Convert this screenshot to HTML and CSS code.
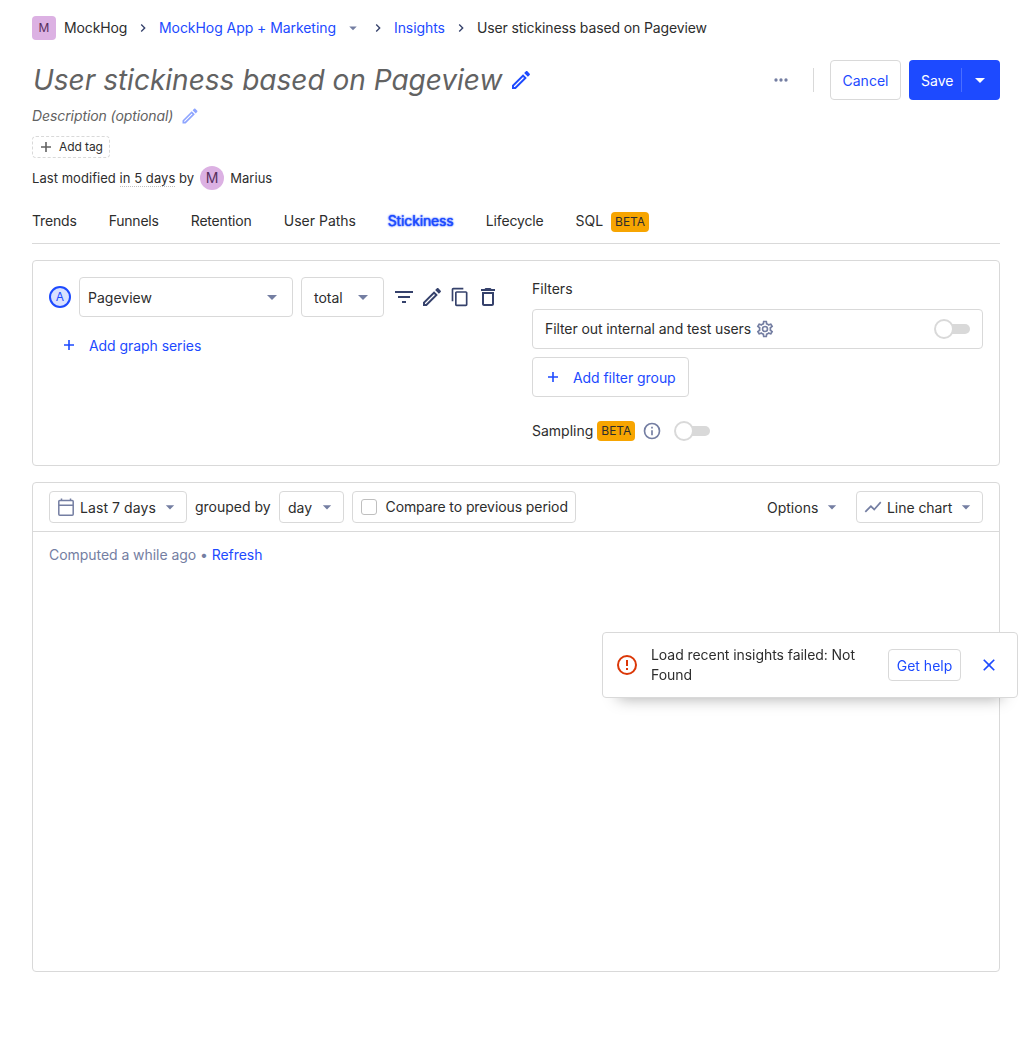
FILE: index.html
```html
<!DOCTYPE html>
<html lang="en">
<head>
<meta charset="utf-8">
<title>User stickiness based on Pageview</title>
<link rel="stylesheet" href="styles.css">
</head>
<body>
<svg class="defs" aria-hidden="true">
  <symbol id="chevron" viewBox="0 0 24 24"><path d="M8.59 16.59 13.17 12 8.59 7.41 10 6l6 6-6 6z"/></symbol>
  <symbol id="caret" viewBox="0 0 24 24"><path d="m7 10 5 5 5-5z"/></symbol>
  <symbol id="pencil" viewBox="0 0 24 24"><path d="M14.06 9.02l.92.92L5.92 19H5v-.92l9.06-9.06M17.66 3c-.25 0-.51.1-.7.29l-1.83 1.83 3.75 3.75 1.83-1.83c.39-.39.39-1.02 0-1.41l-2.34-2.34c-.2-.2-.45-.29-.71-.29zm-3.6 3.19L3 17.25V21h3.75L17.81 9.94l-3.75-3.75z"/></symbol>
  <symbol id="plus" viewBox="0 0 20 20"><path d="M15 10.800h-4.200V15H9.200v-4.200H5V9.200h4.200V5h1.600v4.200H15z"/></symbol>
</svg>
<main class="page">
  <nav class="crumbs">
    <span class="avatar square">M</span><span class="org">MockHog</span>
    <svg class="chev"><use href="#chevron"/></svg>
    <a class="project">MockHog App + Marketing</a><svg class="crumb-caret"><use href="#caret"/></svg>
    <svg class="chev"><use href="#chevron"/></svg>
    <a class="section">Insights</a>
    <svg class="chev"><use href="#chevron"/></svg>
    <span class="current">User stickiness based on Pageview</span>
  </nav>
  <header class="titlebar">
    <h1>User stickiness based on Pageview</h1>
    <svg class="title-edit"><use href="#pencil"/></svg>
    <div class="actions">
      <svg class="more" viewBox="0 0 24 24"><path d="M6 10a2 2 0 1 0 0 4 2 2 0 0 0 0-4zm6 0a2 2 0 1 0 0 4 2 2 0 0 0 0-4zm6 0a2 2 0 1 0 0 4 2 2 0 0 0 0-4z"/></svg>
      <i class="divider"></i>
      <button class="btn cancel">Cancel</button>
      <div class="save"><span>Save</span><i></i><svg><use href="#caret"/></svg></div>
    </div>
  </header>
  <div class="description"><em>Description (optional)</em><svg><use href="#pencil"/></svg></div>
  <div class="tag"><svg><use href="#plus"/></svg><span>Add tag</span></div>
  <div class="modified"><span>Last modified <u>in 5 days</u> by</span><span class="avatar round">M</span><span>Marius</span></div>
  <nav class="tabs">
    <span>Trends</span><span>Funnels</span><span>Retention</span><span class="paths">User Paths</span><span class="active">Stickiness</span><span>Lifecycle</span><span class="sql">SQL <b class="beta">BETA</b></span>
  </nav>
  <section class="card query">
    <div class="series">
      <div class="series-row">
        <span class="letter">A</span>
        <div class="btn event"><span>Pageview</span><svg><use href="#caret"/></svg></div>
        <div class="btn math"><span>total</span><svg><use href="#caret"/></svg></div>
        <div class="tools">
          <svg viewBox="0 0 24 24"><path d="M10 18h4v-2h-4v2zM3 6v2h18V6H3zm3 7h12v-2H6v2z"/></svg>
          <svg><use href="#pencil"/></svg>
          <svg class="copy" viewBox="0 0 24 24"><path d="M16 1H4c-1.100 0-2 .9-2 2v14h2V3h12V1zm3 4H8c-1.100 0-2 .9-2 2v14c0 1.100.9 2 2 2h11c1.100 0 2-.9 2-2V7c0-1.100-.9-2-2-2zm0 16H8V7h11v14z"/></svg>
          <svg viewBox="0 0 24 24"><path d="M6 19c0 1.100.9 2 2 2h8c1.100 0 2-.9 2-2V7H6v12zM8 9h8v10H8V9zm7.500-5-1-1h-5l-1 1H5v2h14V4z"/></svg>
        </div>
      </div>
      <div class="add-series"><svg><use href="#plus"/></svg><span>Add graph series</span></div>
    </div>
    <div class="filters">
      <div class="filters-title">Filters</div>
      <div class="btn internal"><span>Filter out internal and test users</span>
        <svg class="gear" viewBox="0 0 24 24"><path d="M19.430 12.980c.04-.32.07-.64.07-.98s-.03-.66-.07-.98l2.110-1.650c.19-.15.24-.42.12-.64l-2-3.460a.5.5 0 0 0-.61-.22l-2.490 1c-.52-.4-1.080-.73-1.690-.98l-.38-2.650A.49.49 0 0 0 14 2h-4c-.25 0-.46.18-.49.42l-.38 2.650c-.61.25-1.170.59-1.690.98l-2.490-1a.5.5 0 0 0-.61.22l-2 3.460c-.13.22-.07.49.12.64l2.110 1.650c-.04.32-.07.65-.07.98s.03.66.07.98l-2.110 1.650c-.19.15-.24.42-.12.64l2 3.460c.12.22.39.3.61.22l2.490-1c.52.4 1.080.73 1.690.98l.38 2.650c.03.24.24.42.49.42h4c.25 0 .46-.18.49-.42l.38-2.650c.61-.25 1.170-.59 1.690-.98l2.490 1c.23.09.49 0 .61-.22l2-3.460c.12-.22.07-.49-.12-.64zm-1.980-1.710c.04.31.05.52.05.73s-.02.43-.05.73l-.14 1.130.89.7 1.080.84-.7 1.210-1.270-.51-1.040-.42-.9.68c-.43.32-.84.56-1.250.73l-1.060.43-.16 1.130-.2 1.350h-1.400l-.19-1.350-.16-1.130-1.060-.43c-.43-.18-.83-.41-1.230-.71l-.91-.7-1.060.43-1.270.51-.7-1.210 1.080-.84.89-.7-.14-1.130c-.03-.31-.05-.54-.05-.74s.02-.43.05-.73l.14-1.130-.89-.7-1.080-.84.7-1.210 1.270.51 1.040.42.9-.68c.43-.32.84-.56 1.250-.73l1.060-.43.16-1.130.2-1.350h1.390l.19 1.350.16 1.130 1.060.43c.43.18.83.41 1.230.71l.91.7 1.060-.43 1.270-.51.7 1.210-1.070.85-.89.7zM12 8a4 4 0 1 0 0 8 4 4 0 0 0 0-8zm0 6a2 2 0 1 1 0-4 2 2 0 0 1 0 4z"/></svg>
        <span class="switch"><i></i></span>
      </div>
      <div class="btn add-filter"><svg><use href="#plus"/></svg><span>Add filter group</span></div>
      <div class="sampling"><span>Sampling</span><b class="beta">BETA</b>
        <svg viewBox="0 0 24 24"><path d="M11 7h2v2h-2zm0 4h2v6h-2zm1-9a10 10 0 1 0 0 20 10 10 0 0 0 0-20zm0 18a8 8 0 1 1 0-16 8 8 0 0 1 0 16z"/></svg>
        <span class="switch"><i></i></span>
      </div>
    </div>
  </section>
  <section class="card result">
    <div class="toolbar">
      <div class="btn small range"><svg class="lead calendar" viewBox="0 0 20 20"><path d="M3.800 3.500h12.400a1 1 0 0 1 1 1v12.700a1 1 0 0 1-1 1H3.800a1 1 0 0 1-1-1V4.500a1 1 0 0 1 1-1zM2.800 8.300h14.400M5.500 1.500v2M14.500 1.500v2"/></svg><span>Last 7 days</span><svg class="drop"><use href="#caret"/></svg></div>
      <span class="grouped">grouped by</span>
      <div class="btn small interval"><span>day</span><svg class="drop"><use href="#caret"/></svg></div>
      <label class="btn small compare"><i class="box"></i><span>Compare to previous period</span></label>
      <div class="options"><span>Options</span><svg class="drop"><use href="#caret"/></svg></div>
      <div class="btn small chart"><svg class="lead" viewBox="0 0 24 24"><path d="m3.500 18.490 6-6.010 4 4L22 6.920l-1.410-1.410-7.090 7.970-4-4L2 16.990z"/></svg><span>Line chart</span><svg class="drop"><use href="#caret"/></svg></div>
    </div>
    <div class="computed">Computed a while ago • <a>Refresh</a></div>
  </section>
</main>
<div class="toast">
  <svg class="error" viewBox="0 0 24 24"><path d="M11 15h2v2h-2zm0-8h2v6h-2zm1-5a10 10 0 1 0 0 20 10 10 0 0 0 0-20zm0 18a8 8 0 1 1 0-16 8 8 0 0 1 0 16z"/></svg>
  <p>Load recent insights failed: Not Found</p>
  <button class="btn small help">Get help</button>
  <svg class="close" viewBox="0 0 24 24"><path d="M19 6.410 17.590 5 12 10.590 6.410 5 5 6.410 10.590 12 5 17.590 6.410 19 12 13.410 17.590 19 19 17.590 13.410 12z"/></svg>
</div>
</body>
</html>
```
FILE: styles.css
```css
* { box-sizing: border-box; }
body { margin: 0; height: 1052px; background: #fff; color: #2d2d2d; font: 400 14px/20px Inter, sans-serif; overflow: hidden; }
svg { display: block; flex: none; fill: currentColor; }
span { white-space: nowrap; }
a { color: #1d4aff; }
.defs { position: absolute; width: 0; height: 0; }
.page { padding: 16px 32px 0; }
.crumbs { display: flex; align-items: center; height: 24px; white-space: nowrap; }
.avatar { display: flex; align-items: center; justify-content: center; width: 24px; height: 24px; background: #dcb1e3; color: #572e5e; }
.square { border-radius: 4px; font-size: 12px; margin-right: 8px; }
.round { border-radius: 50%; font-size: 14px; margin: 0 6px; }
.org { width: 63px; letter-spacing: -.12px; }
.project { width: 177px; letter-spacing: -.06px; }
.section { width: 51px; letter-spacing: -.08px; }
.current { letter-spacing: -.12px; }
.chev { width: 16px; height: 16px; margin: 0 8px; color: #35416b; }
.crumb-caret { width: 18px; height: 18px; margin: 0 8px; color: #747ea2; }
.crumb-caret + .chev { margin-left: 0; }
.titlebar { display: flex; align-items: center; height: 40px; margin-top: 20px; }
h1 { margin: 0 0 0 1px; font-size: 28px; line-height: 40px; font-weight: 400; font-style: italic; color: #626262; white-space: nowrap; }
.title-edit { width: 24px; height: 24px; margin-left: 7px; color: #1d4aff; }
.actions { display: flex; align-items: center; margin-left: auto; }
.more { width: 20px; height: 20px; color: #747ea2; margin-right: 22px; }
.divider { width: 1px; height: 24px; background: #d9d9d9; margin-right: 16px; }
.btn { display: flex; align-items: center; height: 40px; border: 1px solid #d9d9d9; border-radius: 4px; background: #fff; color: #2d2d2d; font: inherit; padding: 0; }
.cancel { width: 71px; justify-content: center; color: #1d4aff; margin-right: 8px; padding-top: 2px; }
.save { display: flex; align-items: center; width: 91px; height: 40px; border-radius: 4px; background: #1d4aff; color: #fff; padding-left: 12px; }
.save span { width: 40px; padding-top: 2px; }
.save i { width: 1px; height: 24px; background: #4a6eff; }
.save svg { width: 24px; height: 24px; margin-left: 6px; }
.description { display: flex; align-items: center; height: 20px; margin-top: 6px; color: #626262; letter-spacing: -.09px; }
.description svg { width: 20px; height: 20px; margin-left: 7px; color: #8ea5ff; }
.tag { display: flex; align-items: center; width: 78px; height: 22px; margin-top: 10px; border: 1px dashed #d9d9d9; border-radius: 4px; font-size: 12px; padding-left: 3px; letter-spacing: -.08px; }
.tag svg { width: 20px; height: 20px; margin-right: 3px; color: #626262; }
.modified { display: flex; align-items: center; height: 24px; margin-top: 8px; font-size: 13px; letter-spacing: .05px; }
.modified u { display: inline-block; line-height: 15px; text-decoration: none; border-bottom: 1px dotted #bfbfbf; }
.tabs { display: flex; gap: 32px; height: 54px; border-bottom: 1px solid #d9d9d9; padding-top: 21px; letter-spacing: -.15px; }
.tabs .paths, .tabs .sql { letter-spacing: 0; }
.tabs .paths { width: 72px; }
.tabs span:nth-child(2) { width: 50px; letter-spacing: -.25px; }
.tabs span:nth-child(3) { width: 61px; letter-spacing: -.2px; }
.active { width: 66px; color: #1d4aff; text-shadow: 0 0 1px #1d4aff, 0 0 2px #1d4aff; }
.beta { display: inline-block; width: 38px; height: 20px; border-radius: 4px; background: #f7a501; font-size: 12px; font-weight: 400; text-align: center; }
.tabs .beta { margin-left: 4px; }
.card { border: 1px solid #d9d9d9; border-radius: 4px; }
.query { display: grid; grid-template-columns: 467px 451px; gap: 16px; height: 206px; margin-top: 16px; padding: 16px; }
.series-row { display: flex; align-items: center; }
.letter { display: flex; align-items: center; justify-content: center; width: 22px; height: 22px; border: 2px solid #1d4aff; border-radius: 50%; background: #d9e1ff; color: #1d4aff; font-size: 12px; margin-right: 8px; }
.event { width: 214px; padding: 2px 8px 0; justify-content: space-between; margin-right: 8px; }
.event svg, .math svg { width: 24px; height: 24px; color: #747ea2; margin-top: -2px; }
.math { width: 83px; padding: 2px 8px 0 12px; justify-content: space-between; }
.tools { display: flex; gap: 4px; margin-left: 8px; color: #35416b; }
.tools svg { width: 24px; height: 24px; }
.tools .copy { width: 20px; height: 20px; margin: 2px; }
.add-series { display: flex; align-items: center; height: 40px; margin-top: 8px; padding-left: 10px; color: #1d4aff; letter-spacing: -.06px; }
.add-series span { padding-top: 2px; }
.add-series svg, .add-filter svg { width: 20px; height: 20px; margin: 0 10px 0 0; }
.add-filter svg { margin-top: -2px; }
.series + .filters { margin-top: 2px; }
.filters-title { height: 30px; }
.internal { padding: 0 12px; letter-spacing: -.09px; }
.gear { width: 20px; height: 20px; margin-left: 4px; color: #747ea2; }
.internal .switch { margin-left: auto; }
.switch { display: flex; align-items: center; width: 36px; height: 20px; }
.switch::after { content: ""; width: 18px; height: 10px; margin-left: -2px; border-radius: 0 5px 5px 0; background: #d9d9d9; }
.switch i { width: 20px; height: 20px; border: 2px solid #d9d9d9; border-radius: 50%; background: #fff; flex: none; }
.add-filter { width: 157px; margin-top: 8px; padding: 2px 0 0 10px; color: #1d4aff; letter-spacing: -.06px; }
.sampling { display: flex; align-items: center; height: 20px; margin-top: 24px; }
.sampling .beta { margin-left: 4px; }
.sampling svg { width: 20px; height: 20px; margin: 0 12px 0 7px; color: #747ea2; }
.result { height: 490px; margin-top: 16px; }
.toolbar { display: flex; align-items: center; height: 49px; padding: 0 16px; border-bottom: 1px solid #d9d9d9; }
.small { height: 32px; }
.lead { width: 20px; height: 20px; margin-right: 4px; color: #747ea2; }
.calendar { fill: none; stroke: currentColor; stroke-width: 1.5; }
.drop { width: 20px; height: 20px; color: #747ea2; margin-left: auto; }
.small, .options { padding: 0 6px; }
.range span, .interval span, .chart span, .options span, .help { padding-top: 2px; }
.range { width: 138px; letter-spacing: .08px; }
.grouped { width: 76px; margin: 0 8px; }
.interval { width: 65px; padding-left: 8px; }
.compare { width: 224px; padding-left: 8px; margin-left: 8px; letter-spacing: -.09px; }
.box { width: 16px; height: 16px; border: 1px solid #bfbfbf; border-radius: 3px; margin-right: 8px; flex: none; }
.compare span { padding-left: .5px; }
.options { display: flex; align-items: center; width: 87px; margin: 0 8px 0 auto; }
.chart { width: 127px; letter-spacing: -.06px; }
.computed { padding: 13px 16px; color: #747ea2; letter-spacing: -.05px; }
.toast { position: fixed; left: 602px; top: 632px; display: flex; align-items: center; width: 416px; height: 66px; border: 1px solid #d9d9d9; border-radius: 4px; background: #fff; box-shadow: 0 16px 16px -16px rgba(0,0,0,.35); padding-left: 12px; }
.error { width: 24px; height: 24px; color: #db3707; margin-right: 12px; }
.toast p { margin: 0; width: 237px; padding-right: 12px; letter-spacing: -.06px; }
.help { width: 73px; justify-content: center; color: #1d4aff; }
.close { width: 20px; height: 20px; margin-left: 18px; color: #1d4aff; }
```
